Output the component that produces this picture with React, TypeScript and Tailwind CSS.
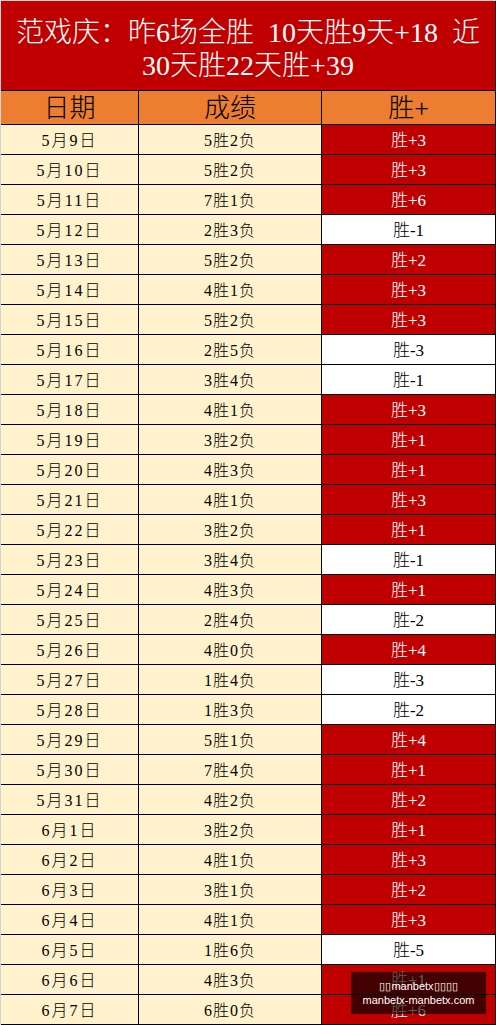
import React from 'react';

type Row = { date: string; record: string; diff: string };

const rows: Row[] = [
  { date: '5月9日', record: '5胜2负', diff: '+3' },
  { date: '5月10日', record: '5胜2负', diff: '+3' },
  { date: '5月11日', record: '7胜1负', diff: '+6' },
  { date: '5月12日', record: '2胜3负', diff: '-1' },
  { date: '5月13日', record: '5胜2负', diff: '+2' },
  { date: '5月14日', record: '4胜1负', diff: '+3' },
  { date: '5月15日', record: '5胜2负', diff: '+3' },
  { date: '5月16日', record: '2胜5负', diff: '-3' },
  { date: '5月17日', record: '3胜4负', diff: '-1' },
  { date: '5月18日', record: '4胜1负', diff: '+3' },
  { date: '5月19日', record: '3胜2负', diff: '+1' },
  { date: '5月20日', record: '4胜3负', diff: '+1' },
  { date: '5月21日', record: '4胜1负', diff: '+3' },
  { date: '5月22日', record: '3胜2负', diff: '+1' },
  { date: '5月23日', record: '3胜4负', diff: '-1' },
  { date: '5月24日', record: '4胜3负', diff: '+1' },
  { date: '5月25日', record: '2胜4负', diff: '-2' },
  { date: '5月26日', record: '4胜0负', diff: '+4' },
  { date: '5月27日', record: '1胜4负', diff: '-3' },
  { date: '5月28日', record: '1胜3负', diff: '-2' },
  { date: '5月29日', record: '5胜1负', diff: '+4' },
  { date: '5月30日', record: '7胜4负', diff: '+1' },
  { date: '5月31日', record: '4胜2负', diff: '+2' },
  { date: '6月1日', record: '3胜2负', diff: '+1' },
  { date: '6月2日', record: '4胜1负', diff: '+3' },
  { date: '6月3日', record: '3胜1负', diff: '+2' },
  { date: '6月4日', record: '4胜1负', diff: '+3' },
  { date: '6月5日', record: '1胜6负', diff: '-5' },
  { date: '6月6日', record: '4胜3负', diff: '+1' },
  { date: '6月7日', record: '6胜0负', diff: '+6' },
];

const font = "font-['Liberation_Serif','Noto_Sans_CJK_SC',serif]";

export default function App() {
  return (
    <div className={`relative w-[496px] border-t border-l border-[#d4d4d4] bg-white font-light ${font}`}>
      {/* title */}
      <div className="h-[90px] border-b border-r border-black bg-[#c00000] pt-[15px] text-center text-[28px] leading-[33px] text-white">
        <div className="whitespace-nowrap">范戏庆：昨6场全胜&nbsp;&nbsp;10天胜9天+18&nbsp; 近</div>
        <div>30天胜22天胜+39</div>
      </div>

      {/* header */}
      <div className="flex h-[34px] bg-[#ed7d31] text-[26px] leading-[35px] text-black">
        <div className="w-[138px] overflow-hidden border-r border-b border-black text-center">日期</div>
        <div className="w-[183px] overflow-hidden border-r border-b border-black text-center">成绩</div>
        <div className="w-[174px] overflow-hidden border-r border-b border-black text-center">胜+</div>
      </div>

      {rows.map((r) => {
        const win = r.diff.startsWith('+');
        return (
          <div key={r.date} className="flex h-[30px] text-[16px] leading-[32px]">
            <div className="w-[138px] overflow-hidden border-r border-b border-black bg-[#fff2cc] text-center tracking-[2px] text-black">
              {r.date}
            </div>
            <div className="w-[183px] overflow-hidden border-r border-b border-black bg-[#fff2cc] text-center tracking-[1px] text-black">
              {r.record}
            </div>
            <div
              className={`w-[174px] overflow-hidden border-r border-b border-black text-center text-[17px] ${
                win ? 'bg-[#c00000] text-white' : 'bg-white text-black'
              }`}
            >
              胜{r.diff}
            </div>
          </div>
        );
      })}

      {/* watermark */}
      <div className="absolute left-[350px] top-[971px] flex h-[42px] w-[135px] flex-col items-center justify-center bg-black/65 font-['Liberation_Sans',sans-serif] text-[11px] font-normal leading-[14px] text-white">
        <div>▯▯manbetx▯▯▯▯</div>
        <div>manbetx-manbetx.com</div>
      </div>
    </div>
  );
}
